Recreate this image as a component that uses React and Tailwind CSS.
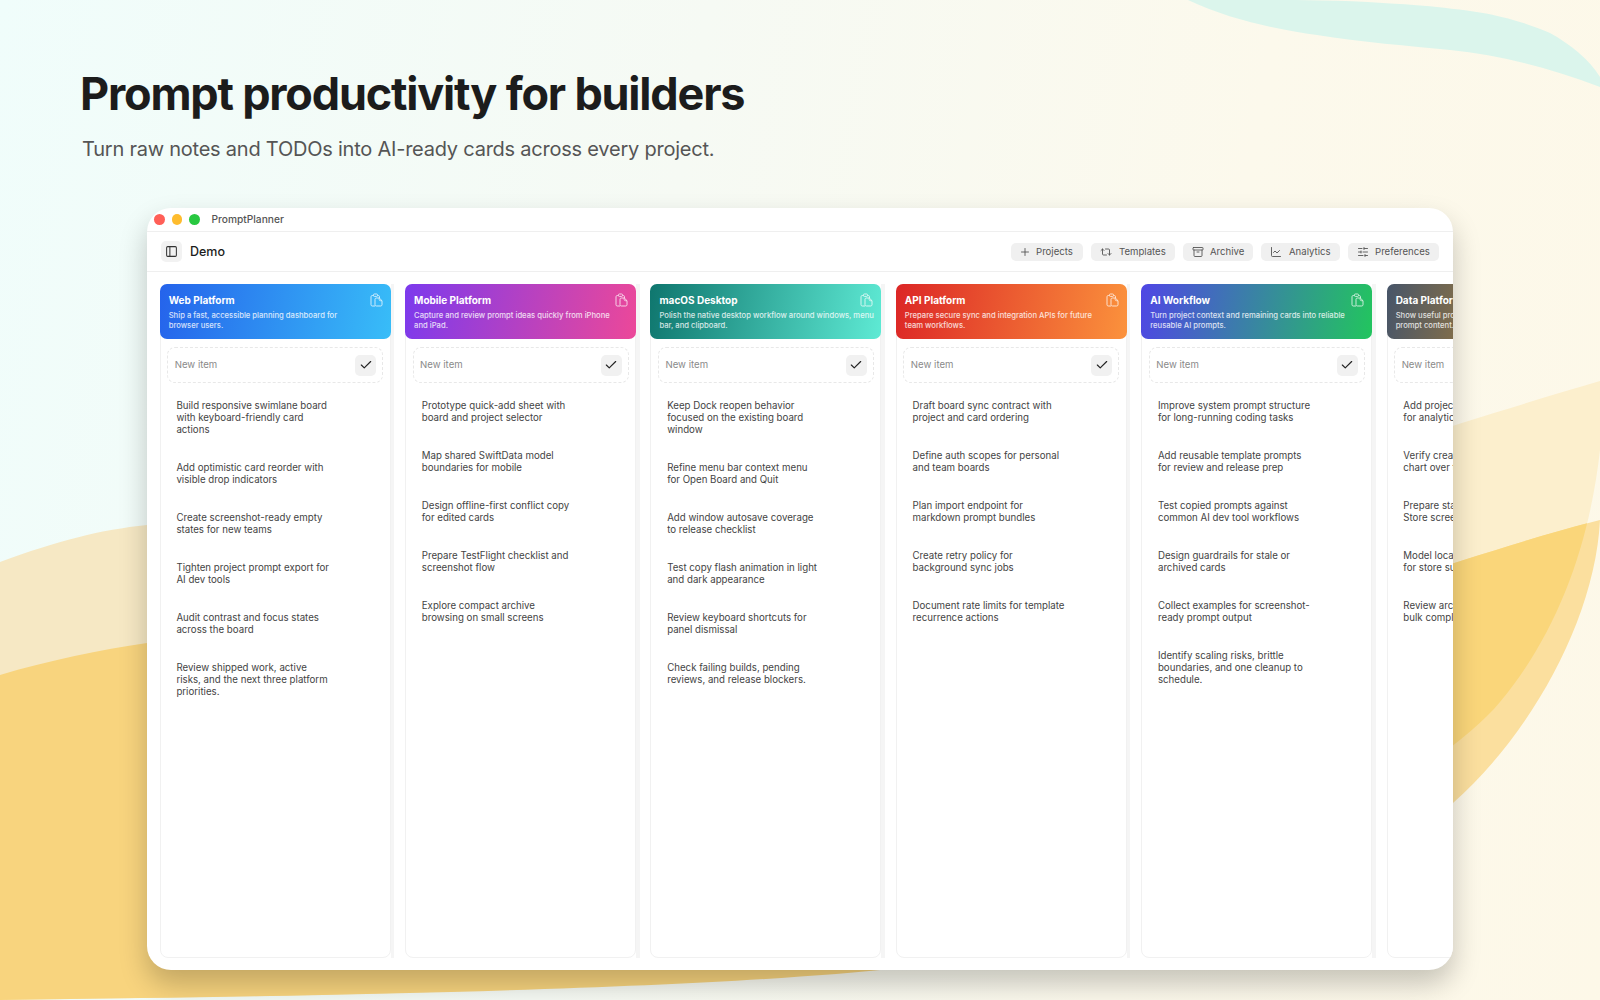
import { Check, Plus, Repeat2, Archive, ChartLine, SlidersHorizontal, PanelLeft } from "lucide-react";

const columns = [
  {
    title: "Web Platform",
    desc: "Ship a fast, accessible planning dashboard for\nbrowser users.",
    gradient: "bg-[linear-gradient(100deg,#2563eb,#38bdf8)]",
    items: [
      "Build responsive swimlane board with keyboard-friendly card actions",
      "Add optimistic card reorder with visible drop indicators",
      "Create screenshot-ready empty states for new teams",
      "Tighten project prompt export for AI dev tools",
      "Audit contrast and focus states across the board",
      "Review shipped work, active risks, and the next three platform priorities.",
    ],
  },
  {
    title: "Mobile Platform",
    desc: "Capture and review prompt ideas quickly from iPhone\nand iPad.",
    gradient: "bg-[linear-gradient(100deg,#7c3aed,#ec4899)]",
    items: [
      "Prototype quick-add sheet with board and project selector",
      "Map shared SwiftData model boundaries for mobile",
      "Design offline-first conflict copy for edited cards",
      "Prepare TestFlight checklist and screenshot flow",
      "Explore compact archive browsing on small screens",
    ],
  },
  {
    title: "macOS Desktop",
    desc: "Polish the native desktop workflow around windows, menu\nbar, and clipboard.",
    gradient: "bg-[linear-gradient(100deg,#0f766e,#5eead4)]",
    items: [
      "Keep Dock reopen behavior focused on the existing board window",
      "Refine menu bar context menu for Open Board and Quit",
      "Add window autosave coverage to release checklist",
      "Test copy flash animation in light and dark appearance",
      "Review keyboard shortcuts for panel dismissal",
      "Check failing builds, pending reviews, and release blockers.",
    ],
  },
  {
    title: "API Platform",
    desc: "Prepare secure sync and integration APIs for future\nteam workflows.",
    gradient: "bg-[linear-gradient(100deg,#dc2626,#fb923c)]",
    items: [
      "Draft board sync contract with project and card ordering",
      "Define auth scopes for personal and team boards",
      "Plan import endpoint for markdown prompt bundles",
      "Create retry policy for background sync jobs",
      "Document rate limits for template recurrence actions",
    ],
  },
  {
    title: "AI Workflow",
    desc: "Turn project context and remaining cards into reliable\nreusable AI prompts.",
    gradient: "bg-[linear-gradient(100deg,#4f46e5,#22c55e)]",
    items: [
      "Improve system prompt structure for long-running coding tasks",
      "Add reusable template prompts for review and release prep",
      "Test copied prompts against common AI dev tool workflows",
      "Design guardrails for stale or archived cards",
      "Collect examples for screenshot-ready prompt output",
      "Identify scaling risks, brittle boundaries, and one cleanup to schedule.",
    ],
  },
  {
    title: "Data Platform",
    desc: "Show useful product signals without\nprompt content.",
    gradient: "bg-[linear-gradient(100deg,#475569,#f59e0b)]",
    items: [
      "Add project filters and trends\nfor analytics views",
      "Verify created and completed\nchart over time",
      "Prepare static App\nStore screenshots",
      "Model local sample data\nfor store submission",
      "Review archive charts and\nbulk completion",
    ],
  },
];

const tools = [
  { label: "Projects", Icon: Plus, cls: "w-[72px] gap-[5px] pl-[8px]" },
  { label: "Templates", Icon: Repeat2, cls: "w-[84px] gap-[7px] pl-[9px]" },
  { label: "Archive", Icon: Archive, cls: "w-[70px] gap-[6px] pl-[9px]" },
  { label: "Analytics", Icon: ChartLine, cls: "w-[79px] gap-[7px] pl-[9px]" },
  { label: "Preferences", Icon: SlidersHorizontal, cls: "w-[91px] gap-[6px] pl-[9px]" },
];

function CopyIcon() {
  return (
    <svg width="13" height="14" viewBox="0 0 13 14" fill="none" stroke="currentColor" strokeWidth="1" strokeLinejoin="round" className="opacity-75">
      <path d="M3.5 2.5H2.2C1.5 2.5 1 3 1 3.7v8.1c0 .7.5 1.2 1.2 1.2H5" />
      <path d="M7.5 2.5h.8c.7 0 1.2.5 1.2 1.2V5" />
      <rect x="3.5" y="1" width="4" height="2.4" rx=".8" />
      <path d="M5 6.2C5 5.5 5.5 5 6.2 5h3.1L12 7.7v4.1c0 .7-.5 1.2-1.2 1.2H6.2C5.5 13 5 12.5 5 11.8z" />
      <path d="M9.2 5v1.6c0 .6.5 1.1 1.1 1.1H12" />
    </svg>
  );
}

function Column({ col }) {
  return (
    <div className="flex shrink-0 h-full">
      <div className="w-[231px] h-full rounded-lg border border-[#f1f1f1] bg-white">
        <div className={`relative -m-px h-[55px] rounded-[7px] px-[9px] pt-[9px] text-white ${col.gradient}`}>
          <div className="text-[10px] leading-[14px] font-bold">{col.title}</div>
          <p className="mt-[4px] whitespace-pre text-[7.65px] leading-[10px] font-medium opacity-80">{col.desc}</p>
          <div className="absolute right-[8px] top-[9px]">
            <CopyIcon />
          </div>
        </div>
        <div className="mx-[6.5px] mt-[9px] flex h-[36px] items-center justify-between rounded-lg border border-dashed border-[#e8e8e8] pl-[6.5px] pr-[6px]">
          <span className="text-[9.6px] text-[#8a8a8a]">New item</span>
          <span className="flex h-[21px] w-[21px] items-center justify-center rounded-[5px] bg-[#f1f1f1] text-[#222]">
            <Check size={14} strokeWidth={2} />
          </span>
        </div>
        <ul className="mt-[17px] flex flex-col gap-[26px] pl-[15.7px]">
          {col.items.map((item) => (
            <li key={item} className="w-[155px] whitespace-pre-line text-[9.7px] leading-[12px] text-[#444]">
              {item}
            </li>
          ))}
        </ul>
      </div>
      <div className="w-[3.5px] h-full bg-[#f5f5f5]" />
    </div>
  );
}

export default function App() {
  return (
    <div className="relative h-[1000px] w-[1600px] overflow-hidden bg-[linear-gradient(100deg,#f0fdfb_0%,#f6faf4_40%,#fcf9ec_72%,#fdf8e8_100%)] font-['Inter',sans-serif]">
      {/* background waves */}
      <svg className="absolute inset-0" width="1600" height="1000" viewBox="0 0 1600 1000">
        <defs>
          <clipPath id="waveA">
            <path d="M1300 470C1380 450 1500 410 1600 381L1600 450C1590 540 1560 630 1500 702C1470 738 1400 790 1300 830Z" />
          </clipPath>
        </defs>
        <path d="M1188 0C1230 20 1280 30 1317 35C1360 42 1410 46 1450 50C1500 55 1550 68 1600 87L1600 77C1590 60 1570 44 1550 33C1525 22 1500 16 1483 13C1440 6 1400 4 1383 3C1340 0 1300 0 1267 0Z" fill="#dbf5ec" />
        <path d="M0 562C60 540 100 530 147 525L900 525L900 966C750 982 500 993 140 998L0 1000Z" fill="#f6e8c4" />
        <path d="M0 675C50 660 100 650 147 643L900 640L900 968C750 984 500 993 140 998L0 1000Z" fill="#f8d47e" />
        <path d="M1300 470C1380 450 1500 410 1600 381L1600 450C1590 540 1560 630 1500 702C1470 738 1400 790 1300 830Z" fill="#fcefcd" />
        <path d="M1300 610C1370 593 1500 545 1600 520C1595 620 1530 735 1453 803L1300 900Z" fill="#fbdf9e" />
        <path d="M1300 610C1370 593 1500 545 1600 520C1595 620 1530 735 1453 803L1300 900Z" fill="#fad67a" clipPath="url(#waveA)" />
      </svg>

      <div className="relative pl-[80px] pt-[66px]">
        <h1 className="text-[45px] leading-[56px] font-bold tracking-[-1.2px] text-[#1c1c1c]">Prompt productivity for builders</h1>
        <p className="ml-[2px] mt-[12px] text-[20px] leading-[30px] tracking-[-0.23px] text-[#555]">
          Turn raw notes and TODOs into AI-ready cards across every project.
        </p>
      </div>

      <div className="relative ml-[147px] mt-[44px] flex h-[762px] w-[1306px] flex-col overflow-hidden rounded-[24px] bg-white shadow-[0_14px_28px_rgba(0,0,0,0.22)]">
        <div className="flex h-[24px] shrink-0 items-center border-b border-[#efefef] pl-[7px]">
          <span className="h-[10.5px] w-[10.5px] rounded-full bg-[#ff5f57]" />
          <span className="ml-[7px] h-[10.5px] w-[10.5px] rounded-full bg-[#febc2e]" />
          <span className="ml-[7px] h-[10.5px] w-[10.5px] rounded-full bg-[#28c840]" />
          <span className="ml-[12px] text-[10.2px] font-medium text-[#555]">PromptPlanner</span>
        </div>
        <div className="flex h-[40px] shrink-0 items-center justify-between border-b border-[#efefef] pl-[14px] pr-[14px]">
          <div className="flex items-center gap-[8px]">
            <span className="flex h-[21px] w-[21px] items-center justify-center rounded-[5px] bg-[#f2f2f2] text-[#333]">
              <PanelLeft size={13} strokeWidth={1.9} />
            </span>
            <span className="mt-px text-[12.5px] font-medium text-[#1c1c1c]">Demo</span>
          </div>
          <div className="flex items-center gap-[8px]">
            {tools.map(({ label, Icon, cls }) => (
              <span key={label} className={`flex h-[18px] items-center rounded-[5px] bg-[#f0f0f0] text-[9.6px] text-[#555] ${cls}`}>
                <Icon size={12} strokeWidth={1.8} />
                <span className="mt-px">{label}</span>
              </span>
            ))}
          </div>
        </div>
        <div className="flex min-h-0 flex-1 gap-[10.9px] pb-[12px] pl-[12.7px] pt-[12px]">
          {columns.map((col) => (
            <Column key={col.title} col={col} />
          ))}
        </div>
      </div>
    </div>
  );
}
